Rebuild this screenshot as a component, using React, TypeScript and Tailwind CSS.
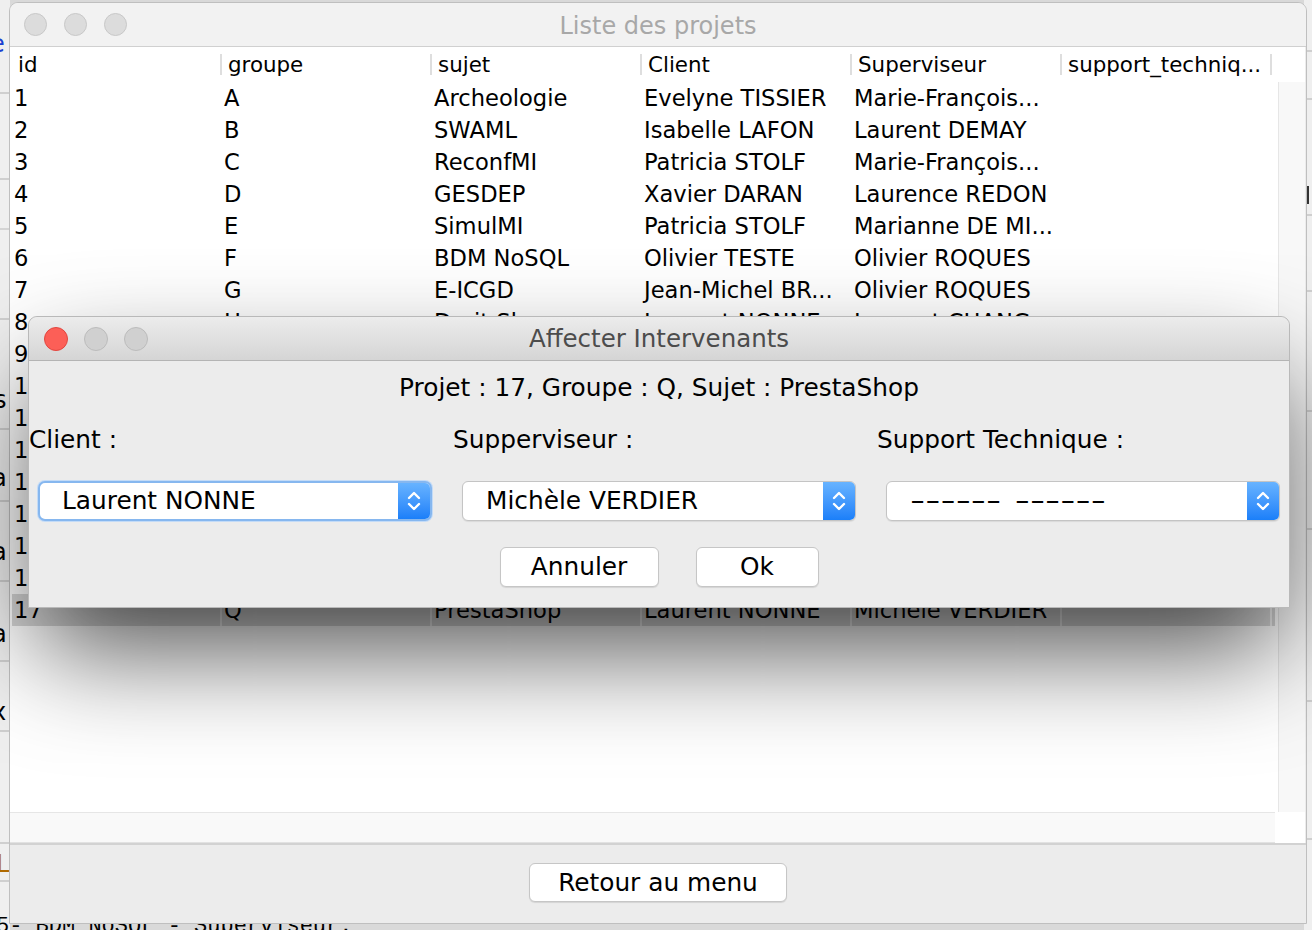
import React from "react";

const rows: string[][] = [
  ["1", "A", "Archeologie", "Evelyne TISSIER", "Marie-François..."],
  ["2", "B", "SWAML", "Isabelle LAFON", "Laurent DEMAY"],
  ["3", "C", "ReconfMI", "Patricia STOLF", "Marie-François..."],
  ["4", "D", "GESDEP", "Xavier DARAN", "Laurence REDON"],
  ["5", "E", "SimulMI", "Patricia STOLF", "Marianne DE MI..."],
  ["6", "F", "BDM NoSQL", "Olivier TESTE", "Olivier ROQUES"],
  ["7", "G", "E-ICGD", "Jean-Michel BR...", "Olivier ROQUES"],
  ["8", "H", "Droit Shop", "Laurent NONNE", "Laurent CHANG"],
  ["9", "I", "GesProj", "Olivier TESTE", "Laurent DEMAY"],
  ["10", "J", "MobiTour", "Patricia STOLF", "Olivier ROQUES"],
  ["11", "K", "SmartHome", "Xavier DARAN", "Laurence REDON"],
  ["12", "L", "WebAgenda", "Isabelle LAFON", "Michèle VERDIER"],
  ["13", "M", "DataViz", "Evelyne TISSIER", "Laurent DEMAY"],
  ["14", "N", "E-Learning", "Olivier TESTE", "Olivier ROQUES"],
  ["15", "O", "GeoLoc", "Jean-Michel BR...", "Laurent CHANG"],
  ["16", "P", "CloudBox", "Xavier DARAN", "Laurence REDON"],
  ["17", "Q", "PrestaShop", "Laurent NONNE", "Michèle VERDIER"],
];

const headers = ["id", "groupe", "sujet", "Client", "Superviseur", "support_techniq..."];

function Chevrons() {
  return (
    <svg width="18" height="28" viewBox="0 0 18 28" fill="none">
      <path d="M4 11 L9 6 L14 11" stroke="white" strokeWidth="2.4" strokeLinecap="round" strokeLinejoin="round" />
      <path d="M4 17 L9 22 L14 17" stroke="white" strokeWidth="2.4" strokeLinecap="round" strokeLinejoin="round" />
    </svg>
  );
}

function Combo({ text, focused, dashed }: { text: string; focused?: boolean; dashed?: boolean }) {
  return (
    <div
      className={
        focused
          ? "ml-[9px] w-[394px] h-[40px] flex rounded-[7px] border-2 border-[#86b7ef] bg-white shadow-[0_0_0_1px_#c3dbf7]"
          : "ml-[9px] w-[394px] h-[40px] flex rounded-[6px] border border-[#c4c4c4] bg-white shadow-[0_1px_1px_rgba(0,0,0,0.08)]"
      }
    >
      <div
        className={
          focused
            ? "flex-1 flex items-center pl-[22px] text-[24.8px] text-black leading-none overflow-hidden"
            : "flex-1 flex items-center pl-[23px] text-[24.8px] text-black leading-none overflow-hidden"
        }
      >
        {dashed ? (
          <span className="inline-block origin-left scale-x-[1.7] whitespace-pre">{text}</span>
        ) : (
          text
        )}
      </div>
      <div className="w-[32px] flex items-center justify-center rounded-r-[5px] bg-gradient-to-b from-[#67b3ff] to-[#1a7ff9]">
        <Chevrons />
      </div>
    </div>
  );
}

function Btn({ label, w }: { label: string; w: string }) {
  return (
    <div
      className={`${w} h-[40px] flex items-center justify-center rounded-[6px] border border-[#c6c6c6] bg-white shadow-[0_1px_1px_rgba(0,0,0,0.1)] text-[24.8px] text-black`}
    >
      {label}
    </div>
  );
}

export default function App() {
  return (
    <div className="relative w-[1312px] h-[930px] overflow-hidden bg-[#d9d9d9] font-['DejaVu_Sans',sans-serif]">
      {/* window behind, left strip */}
      <div className="absolute left-0 top-0 w-[10px] h-[930px] bg-[#efefef] overflow-hidden text-[24px] leading-none text-black">
        <div className="absolute left-[-10px] top-[32px] text-[#1a3fd0]">e</div>
        <div className="absolute left-0 top-[92px] w-full h-[2px] bg-[#cfcfcf]" />
        <div className="absolute left-0 top-[178px] w-full h-[2px] bg-[#cfcfcf]" />
        <div className="absolute left-0 top-[228px] w-full h-[2px] bg-[#d4d4d4]" />
        <div className="absolute left-0 top-[318px] w-full h-[2px] bg-[#cfcfcf]" />
        <div className="absolute left-[-6px] top-[388px]">s</div>
        <div className="absolute left-0 top-[428px] w-full h-[2px] bg-[#cfcfcf]" />
        <div className="absolute left-[-8px] top-[466px]">a</div>
        <div className="absolute left-0 top-[500px] w-full h-[2px] bg-[#cfcfcf]" />
        <div className="absolute left-[-8px] top-[540px]">a</div>
        <div className="absolute left-0 top-[580px] w-full h-[2px] bg-[#cfcfcf]" />
        <div className="absolute left-[-8px] top-[622px]">a</div>
        <div className="absolute left-0 top-[660px] w-full h-[2px] bg-[#cfcfcf]" />
        <div className="absolute left-[-8px] top-[700px]">x</div>
        <div className="absolute left-0 top-[730px] w-full h-[2px] bg-[#cfcfcf]" />
        <div className="absolute left-0 top-[842px] w-full h-[2px] bg-[#cfcfcf]" />
        <div className="absolute left-[-4px] top-[852px] text-[#b06a00]">Li</div>
        <div className="absolute left-0 top-[880px] w-full h-[2px] bg-[#cfcfcf]" />
      </div>
      {/* window behind, right strip */}
      <div className="absolute right-0 top-0 w-[8px] h-[930px] bg-[#efefef] overflow-hidden">
        <div className="absolute left-0 top-[50px] w-full h-[2px] bg-[#cfcfcf]" />
        <div className="absolute left-0 top-[98px] w-full h-[2px] bg-[#cfcfcf]" />
        <div className="absolute left-[2px] top-[186px] w-[3px] h-[18px] bg-[#333]" />
        <div className="absolute left-0 top-[214px] w-full h-[2px] bg-[#cfcfcf]" />
        <div className="absolute left-0 top-[290px] w-full h-[2px] bg-[#cfcfcf]" />
        <div className="absolute left-0 top-[410px] w-full h-[2px] bg-[#cfcfcf]" />
        <div className="absolute left-0 top-[528px] w-full h-[2px] bg-[#cfcfcf]" />
        <div className="absolute left-0 top-[700px] w-full h-[2px] bg-[#cfcfcf]" />
        <div className="absolute left-0 top-[838px] w-full h-[2px] bg-[#cfcfcf]" />
      </div>
      {/* text of window behind at bottom */}
      <div className="absolute left-[-4px] top-[916px] text-[22px] leading-none text-black font-['Liberation_Mono',monospace] whitespace-nowrap">
        5- BDM NoSQL - Superviseur:
      </div>

      {/* main window */}
      <div className="absolute left-[9px] top-[2px] w-[1298px] h-[922px] flex flex-col rounded-t-[9px] border border-[#bfbfbf] bg-[#ececec] overflow-hidden">
        {/* title bar */}
        <div className="h-[44px] shrink-0 grid grid-cols-[1fr_auto_1fr] items-center border-b border-[#d0d0d0] bg-[#f2f2f2]">
          <div className="flex items-center gap-[17px] pl-[14px]">
            <div className="w-[23px] h-[23px] rounded-full bg-[#dcdcdc] border border-[#c8c8c8]" />
            <div className="w-[23px] h-[23px] rounded-full bg-[#dcdcdc] border border-[#c8c8c8]" />
            <div className="w-[23px] h-[23px] rounded-full bg-[#dcdcdc] border border-[#c8c8c8]" />
          </div>
          <div className="pt-[2px] text-[24px] text-[#a8a8a8] leading-none">Liste des projets</div>
          <div />
        </div>

        {/* scroll pane */}
        <div className="h-[796px] shrink-0 flex bg-white">
          <div className="w-[1265px] flex flex-col">
            {/* header */}
            <div className="h-[35px] flex pl-[2px] items-center">
              {headers.map((h, i) => (
                <div key={i} className="w-[210px] h-[35px] flex items-center justify-between">
                  <span className="pl-[6px] text-[21.4px] text-black leading-none whitespace-nowrap">{h}</span>
                  <div className="w-[2px] h-[21px] bg-[#dedede]" />
                </div>
              ))}
            </div>
            {/* body */}
            <div className="h-[730px] flex flex-col pl-[2px]">
              {rows.map((r, ri) => {
                const sel = ri === 16;
                const cells = [...r, ""];
                return (
                  <div key={ri} className={sel ? "h-[32px] flex bg-[#d6d6d6]" : "h-[32px] flex"}>
                    {cells.map((c, ci) => (
                      <div
                        key={ci}
                        className={
                          sel
                            ? "w-[210px] h-[32px] flex items-center border-r-2 border-[#f2f2f2]"
                            : "w-[210px] h-[32px] flex items-center"
                        }
                      >
                        <span className="pl-[2px] text-[22.6px] text-black leading-none whitespace-nowrap">{c}</span>
                      </div>
                    ))}
                  </div>
                );
              })}
            </div>
            {/* horizontal scrollbar */}
            <div className="h-[31px] bg-[#f9f9f9] border-t border-[#e6e6e6] border-b border-b-[#e2e2e2]" />
          </div>
          <div className="w-[27px] ml-[3px] flex flex-col">
            <div className="h-[35px] bg-white" />
            <div className="h-[730px] bg-[#f8f8f8] border-l border-[#e6e6e6]" />
            <div className="h-[31px] bg-white" />
          </div>
          <div className="flex-1 bg-[#ececec]" />
        </div>

        {/* separator */}
        <div className="h-[2px] shrink-0 bg-[#d2d2d2]" />

        {/* bottom panel */}
        <div className="flex-1 flex justify-center pt-[18px] bg-[#ececec]">
          <div className="w-[258px] h-[39px] flex items-center justify-center rounded-[6px] border border-[#c6c6c6] bg-white shadow-[0_1px_1px_rgba(0,0,0,0.1)] text-[24.8px] text-black">
            Retour au menu
          </div>
        </div>
      </div>

      {/* dialog */}
      <div className="absolute left-[28px] top-[316px] w-[1262px] h-[292px] flex flex-col rounded-t-[9px] border border-[#b9b9b9] bg-[#ececec] shadow-[0_50px_110px_-10px_rgba(0,0,0,0.7)]">
        <div className="h-[44px] shrink-0 grid grid-cols-[1fr_auto_1fr] items-center border-b border-[#b4b4b4] rounded-t-[9px] bg-gradient-to-b from-[#ececec] to-[#d5d5d5]">
          <div className="flex items-center gap-[16px] pl-[15px]">
            <div className="w-[24px] h-[24px] rounded-full bg-[#fc5f57] border border-[#e2463f]" />
            <div className="w-[24px] h-[24px] rounded-full bg-[#d0d0d0] border border-[#bcbcbc]" />
            <div className="w-[24px] h-[24px] rounded-full bg-[#d0d0d0] border border-[#bcbcbc]" />
          </div>
          <div className="pt-[2px] text-[24.5px] text-[#4c4c4c] leading-none">Affecter Intervenants</div>
          <div />
        </div>
        <div className="flex-1 flex flex-col pt-[12px]">
          <div className="h-[30px] flex items-center justify-center text-[24.8px] text-black">
            Projet : 17, Groupe : Q, Sujet : PrestaShop
          </div>
          <div className="mt-[22px] grid grid-cols-[424px_424px_1fr]">
            <div className="h-[30px] flex items-center text-[24.8px] text-black">Client :</div>
            <div className="h-[30px] flex items-center text-[24.8px] text-black">Supperviseur :</div>
            <div className="h-[30px] flex items-center text-[24.8px] text-black">Support Technique :</div>
          </div>
          <div className="mt-[26px] grid grid-cols-[424px_424px_1fr]">
            <Combo text="Laurent NONNE" focused />
            <Combo text="Michèle VERDIER" />
            <Combo text="------ ------" dashed />
          </div>
          <div className="mt-[26px] flex justify-center gap-[37px]">
            <Btn label="Annuler" w="w-[159px]" />
            <Btn label="Ok" w="w-[123px]" />
          </div>
        </div>
      </div>
    </div>
  );
}
